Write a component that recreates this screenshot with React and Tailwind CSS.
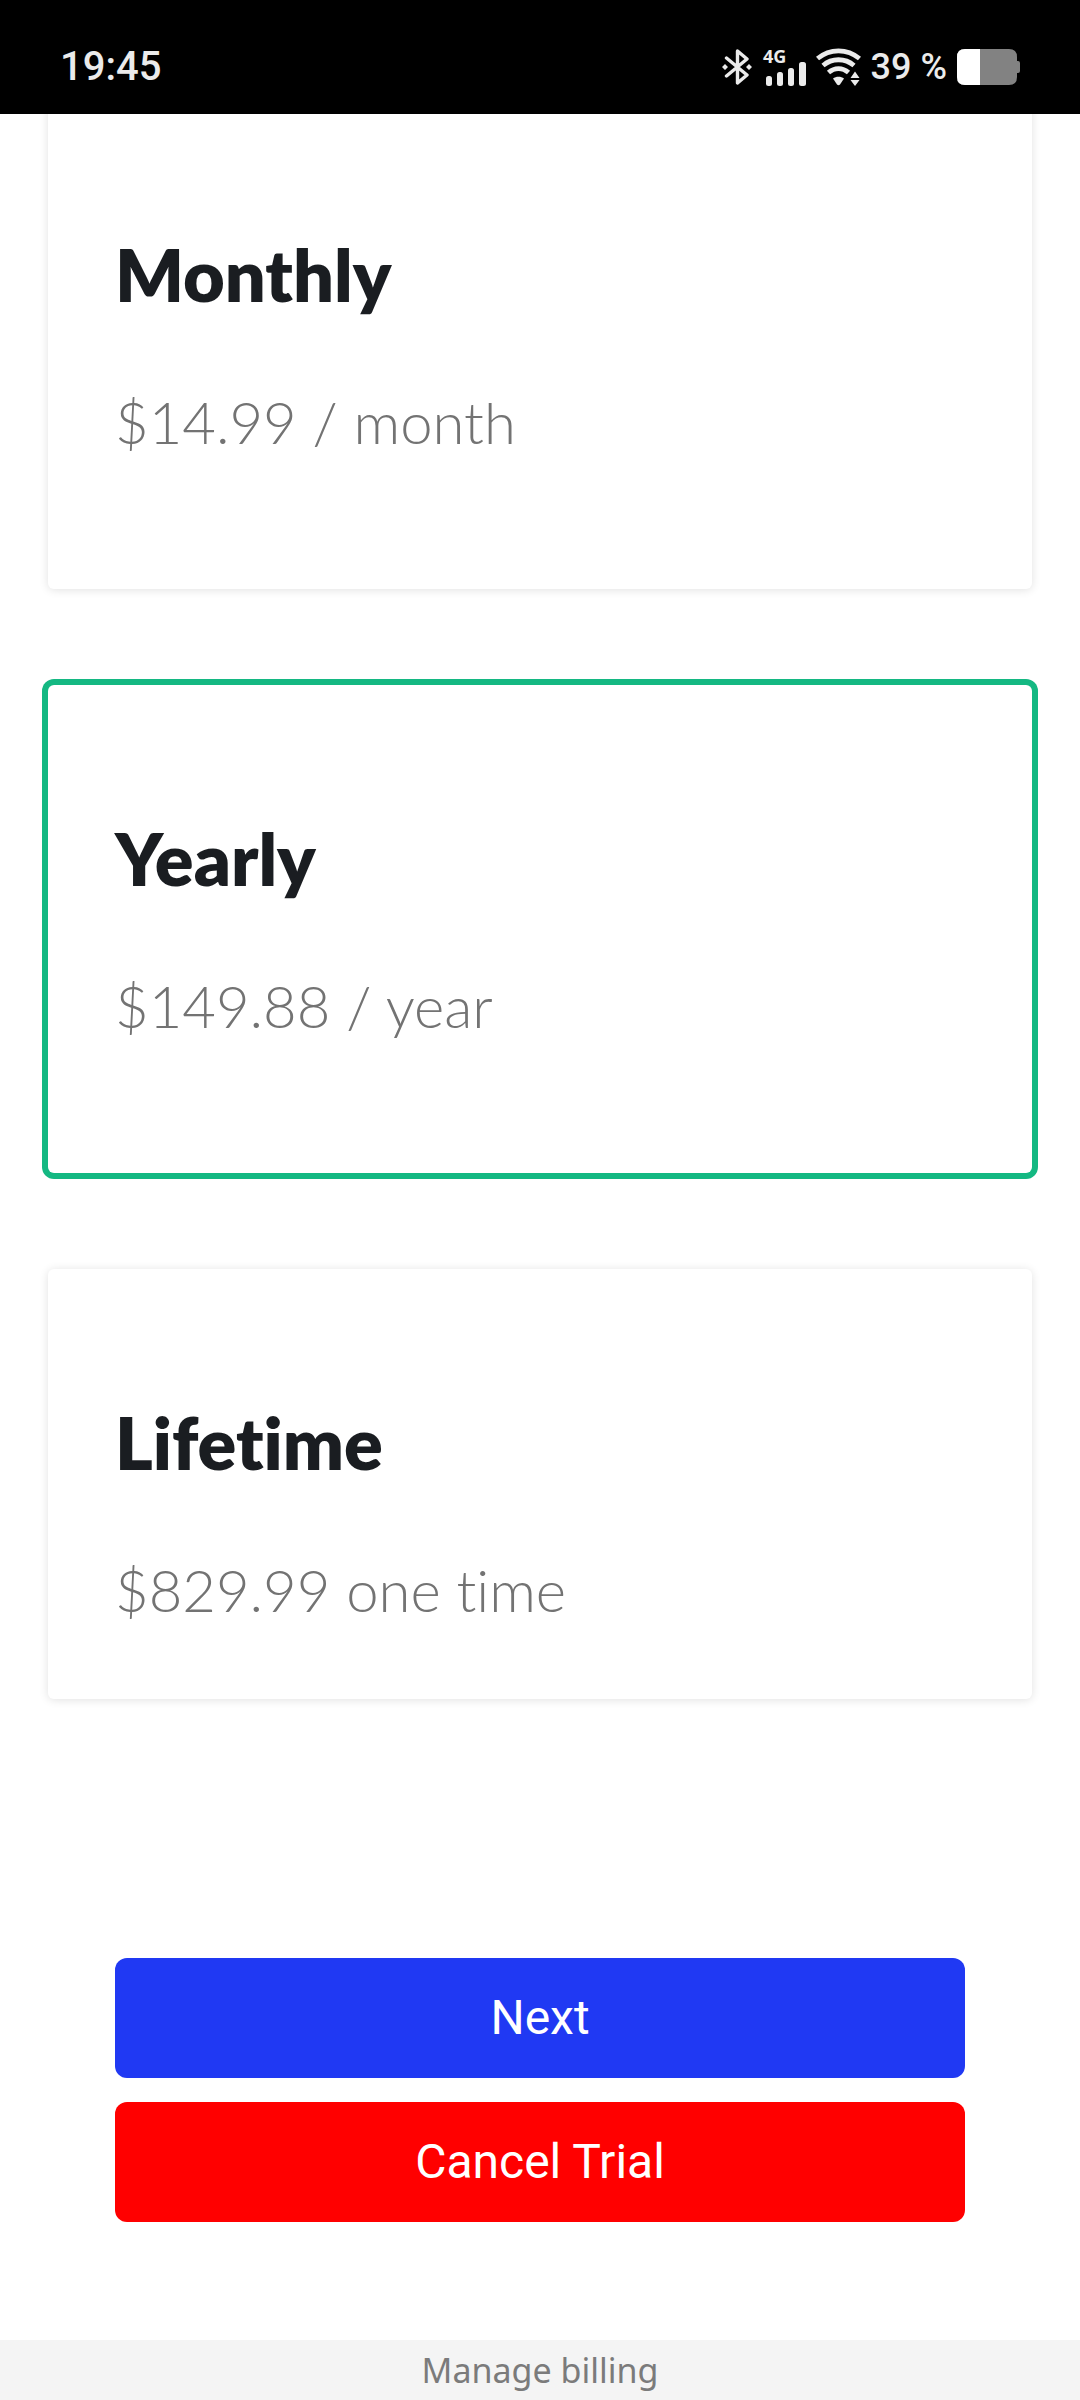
import React, { useState } from "react";

const plans = [
  { id: "monthly", title: "Monthly", price: "$14.99 / month" },
  { id: "yearly", title: "Yearly", price: "$149.88 / year" },
  { id: "lifetime", title: "Lifetime", price: "$829.99 one time" },
];

const BluetoothIcon = () => (
  <svg width="30" height="36" viewBox="0 0 30 36" fill="none" aria-hidden="true">
    <path
      d="M4.500 9 25 26 15.500 34V2L25 10 4.500 27"
      stroke="#ebebeb"
      strokeWidth="3.400"
      strokeLinecap="round"
      strokeLinejoin="round"
    />
    <path d="M3 15 6 18 3 21 0 18ZM27 15 30 18 27 21 24 18Z" fill="#ebebeb" />
  </svg>
);

const SignalIcon = () => (
  <svg width="44" height="52" viewBox="0 -8 44 52" fill="#ebebeb" aria-hidden="true">
    <text x="1" y="14" fontSize="18" fontWeight="700" fontFamily="'Open Sans', sans-serif">
      4G
    </text>
    <rect x="4" y="27" width="6" height="10" rx="2.500" />
    <rect x="15" y="23" width="6" height="14" rx="2.500" />
    <rect x="26" y="19" width="6" height="18" rx="2.500" />
    <rect x="37" y="13" width="7" height="24" rx="2.500" />
  </svg>
);

const WifiIcon = () => (
  <svg width="45" height="38" viewBox="0 0 45 38" fill="none" aria-hidden="true">
    <g stroke="#ebebeb" strokeWidth="4.800">
      <path d="M1.500 10.500C14 .2 31 .2 43.500 10.500" />
      <path d="M7 17.500C16 9.800 29 9.800 38 17.500" />
      <path d="M12.500 24.500C18.500 19.200 26.500 19.200 32.500 24.500" />
    </g>
    <path d="M17 30.500C20 28 25 28 28 30.500L24 36.500Q22.500 38 21 36.500Z" fill="#ebebeb" />
    <path d="M39 23.500 43.500 30H34.500ZM39 38 34.500 32H43.500Z" fill="#ebebeb" />
  </svg>
);

const BatteryIcon = () => (
  <svg width="63" height="36" viewBox="0 0 63 36" aria-hidden="true">
    <path
      d="M8 0H52Q60 0 60 8V12H61Q63 12 63 14V22Q63 24 61 24H60V28Q60 36 52 36H8Q0 36 0 28V8Q0 0 8 0Z"
      fill="#828282"
    />
    <path d="M8 0H23V36H8Q0 36 0 28V8Q0 0 8 0Z" fill="#fff" />
  </svg>
);

const StatusBar = () => (
  <header className="flex justify-between bg-black px-[60px] pt-[41px] pb-[21px] font-[Roboto,sans-serif] font-medium text-[#ebebeb]">
    <span className="text-[40px] leading-[52px]">19:45</span>
    <div className="flex items-center gap-[10px]">
      <BluetoothIcon />
      <SignalIcon />
      <WifiIcon />
      <span className="text-[36px] leading-[52px] whitespace-nowrap">39 %</span>
      <BatteryIcon />
    </div>
  </header>
);

const PlanCard = ({ plan, selected, last, onSelect }) => (
  <label
    className={`block cursor-pointer rounded-md bg-white px-[67px] pt-[123px] font-[Lato,sans-serif] [font-variant-ligatures:none] ${
      last ? "pb-[69px]" : "pb-[127px]"
    } ${
      selected
        ? "shadow-[0_0_0_6px_#14b882]"
        : "shadow-[0_1px_10px_rgba(0,0,0,0.12)]"
    }`}
  >
    <input
      type="radio"
      name="plan"
      value={plan.id}
      checked={selected}
      onChange={() => onSelect(plan.id)}
      className="sr-only"
    />
    <h2 className="text-[72px] leading-[100px] font-extrabold text-[#1a1d21]">
      {plan.title}
    </h2>
    <p className="mt-[58px] text-[58px] leading-[80px] font-light text-[#737373]">
      {plan.price}
    </p>
  </label>
);

export default function App() {
  const [selected, setSelected] = useState("yearly");

  return (
    <div className="flex min-h-screen flex-col bg-white">
      <StatusBar />

      <main className="overflow-hidden px-12 pb-12">
        {/* list is scrolled slightly under the status bar */}
        <div className="-mt-[13px] flex flex-col gap-24">
          {plans.map((plan, i) => (
            <PlanCard
              key={plan.id}
              plan={plan}
              selected={selected === plan.id}
              last={i === plans.length - 1}
              onSelect={setSelected}
            />
          ))}
        </div>

        <div className="mt-[259px] flex flex-col gap-6 px-[67px] font-[Roboto,sans-serif] text-[48px] leading-[60px] text-white">
          <button type="button" className="rounded-xl bg-[#2039f3] py-[30px]">
            Next
          </button>
          <button type="button" className="rounded-xl bg-[#ff0000] py-[30px]">
            Cancel Trial
          </button>
        </div>
      </main>

      <footer className="mt-auto bg-[#f4f4f4] text-center font-['Noto_Sans',sans-serif] text-[34px] leading-[60px] text-[#7b7b7b]">
        <a href="#billing">Manage billing</a>
      </footer>
    </div>
  );
}
